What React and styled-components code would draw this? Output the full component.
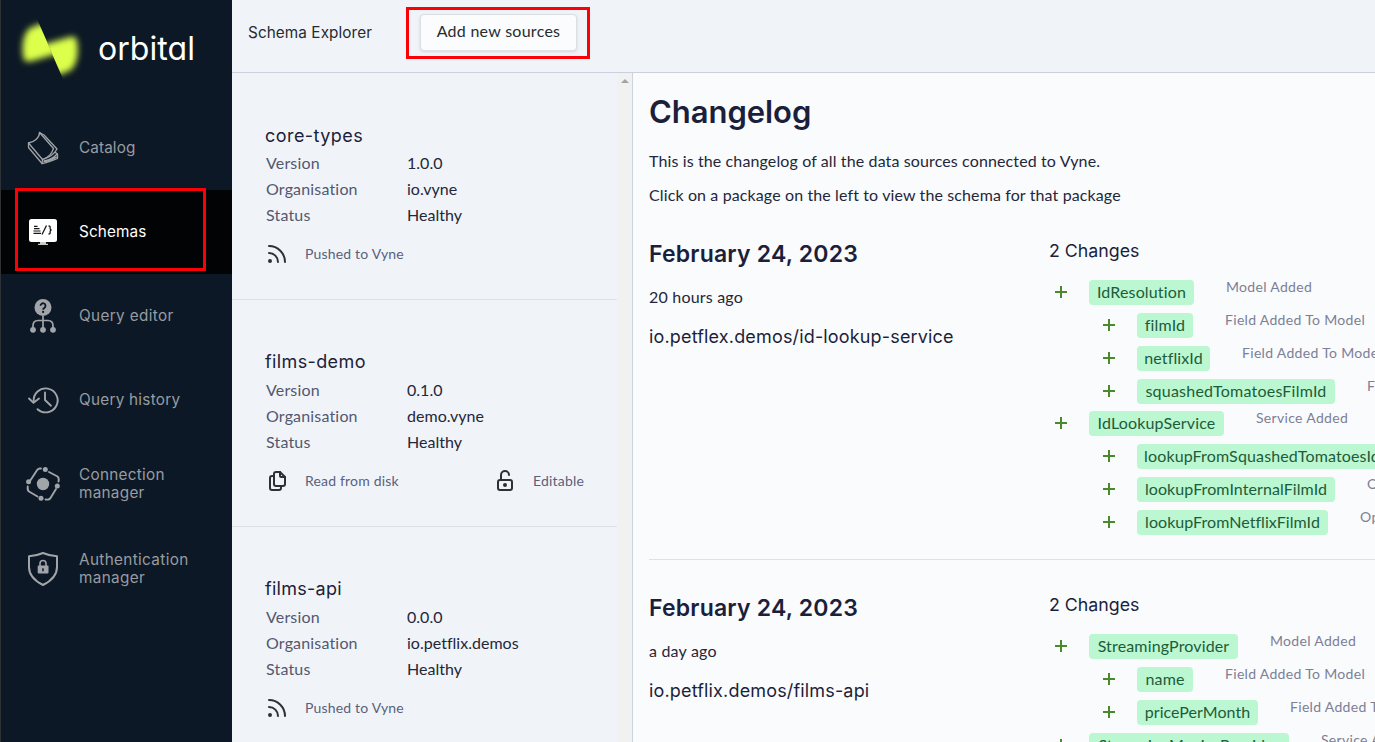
import React from "react";
import styled, { createGlobalStyle, css } from "styled-components";

const display = '"Inter", "Liberation Sans", sans-serif';
const body = '"Lato", "Open Sans", sans-serif';

const GlobalStyle = createGlobalStyle`
  *, *::before, *::after { box-sizing: border-box; }
  body { margin: 0; background: #fafbfd; overflow: hidden; }
  h1, h2, h3, p { margin: 0; }
`;

const Shell = styled.div`
  position: relative;
  display: flex;
  width: 100vw;
  height: 100vh;
  overflow: hidden;
  font-family: ${body};
  font-size: 16px;
  color: #23273a;
`;

/* Sidebar */

const Sidebar = styled.aside`
  flex: 0 0 232px;
  display: flex;
  flex-direction: column;
  background: #0c1825;
  border-left: 1px solid #2f3235;
`;

const Brand = styled.div`
  display: flex;
  align-items: center;
  height: 106px;
  padding: 0 0 8px 13px;
`;

const Wordmark = styled.span`
  margin-left: 10px;
  padding-bottom: 1px;
  font-family: ${display};
  font-feature-settings: "cv11";
  font-size: 32px;
  line-height: 40px;
  letter-spacing: 0.05px;
  color: #fff;
`;

const NavItem = styled.a`
  display: flex;
  align-items: center;
  height: ${(p) => p.$h || 84}px;
  padding-left: 24px;
  gap: 18px;
  font-family: ${display};
  font-size: 15.3px;
  line-height: 18px;
  letter-spacing: ${(p) => p.$ls ?? 0.3}px;
  color: #989ca1;
  white-space: pre-line;
  ${(p) =>
    p.$active &&
    css`
      background: #010305;
      color: #fff;
    `}
`;

const NavIcon = styled.svg`
  flex: none;
  width: 36px;
  height: 36px;
  color: #a1a5a9;
`;

/* Main frame */

const Main = styled.main`
  flex: 1;
  min-width: 0;
  display: flex;
  flex-direction: column;
`;

const Header = styled.header`
  flex: 0 0 73px;
  display: flex;
  align-items: flex-start;
  padding: 14px 16px 0;
  gap: 48px;
  background: #f0f4f9;
  border-bottom: 1px solid #cbd0dc;
`;

const PageTitle = styled.h1`
  width: 124px;
  font: 400 15.3px/37px ${display};
  letter-spacing: 0.08px;
  white-space: nowrap;
  color: #272b30;
`;

const Button = styled.button`
  width: 157px;
  height: 37px;
  padding: 0 0 3px;
  border: 1px solid #dcdfe4;
  border-radius: 4px;
  background: #fbfcfd;
  box-shadow: 0 1px 3px rgba(0, 0, 0, 0.12);
  font: 400 16px/20px ${body};
  letter-spacing: 0.27px;
  color: #272b30;
`;

const Columns = styled.div`
  flex: 1;
  min-height: 0;
  display: flex;
`;

/* Package list */

const PackageList = styled.section`
  flex: 0 0 385px;
  background: #f0f4f9;
  overflow: hidden;
`;

const ScrollTrack = styled.div`
  flex: 0 0 16px;
  display: flex;
  justify-content: center;
  padding-top: 6px;
  background: #f1f1f1;
  border-right: 1px solid #cbd3e1;
`;

const Card = styled.article`
  height: 226.8px;
  padding: 47.6px 33px 0 33px;
  border-bottom: 1px solid #dce0e7;
`;

const CardTitle = styled.h3`
  font: 400 18px/29.4px ${display};
  letter-spacing: ${(p) => p.$ls || 0}px;
  color: #1c2138;
`;

const Property = styled.div`
  display: grid;
  grid-template-columns: 141px 1fr;
  padding-left: 1px;
  line-height: 26px;
  color: #23273a;
`;

const PropertyName = styled.span`
  letter-spacing: 0.17px;
  color: #53586f;
`;

const PropertyValue = styled.span`
  letter-spacing: 0.02px;
`;

const CardFooter = styled.div`
  display: flex;
  justify-content: space-between;
  margin-top: 14px;
`;

const Source = styled.div`
  display: flex;
  align-items: center;
  gap: 16px;
  font-size: 14px;
  line-height: 24px;
  letter-spacing: 0.18px;
  color: #5b6079;
`;

const SourceIcon = styled.svg`
  width: 24px;
  height: 24px;
  fill: none;
  stroke: #2e3033;
  stroke-width: 2;
  stroke-linecap: round;
  stroke-linejoin: round;
`;

/* Changelog */

const Changelog = styled.section`
  flex: 1;
  min-width: 0;
  padding: 16px 0 0 16px;
  background: #fafbfd;
  overflow: hidden;
`;

const Title = styled.h1`
  font: 600 31px/46px ${display};
  letter-spacing: -0.05px;
  color: #1b1f3b;
`;

const Intro = styled.p`
  margin-top: ${(p) => p.$top}px;
  line-height: 22px;
  letter-spacing: 0.12px;
`;

const Entry = styled.article`
  display: flex;
  height: 354px;
  overflow: hidden;
  border-bottom: 1px solid #dde1ea;
`;

const Summary = styled.div`
  flex: 0 0 400px;
`;

const EntryDate = styled.h2`
  padding-top: 32px;
  font: 600 23px/32px ${display};
  letter-spacing: 0.2px;
  color: #1b1f3b;
`;

const Age = styled.p`
  margin-top: 15px;
  line-height: 24px;
  letter-spacing: 0.2px;
`;

const PackageName = styled.h3`
  margin-top: 15px;
  font: 400 18px/26px ${display};
  letter-spacing: 0.16px;
  color: #1b1f3b;
`;

const Changes = styled.div`
  flex: none;
`;

const ChangeCount = styled.h3`
  padding: 33px 0 17px;
  font: 400 17.8px/24px ${display};
  letter-spacing: 0;
  color: #1b1f3b;
`;

const ChangeRow = styled.div`
  display: flex;
  height: 32.85px;
  padding-left: ${(p) => (p.$nested ? 48 : 0)}px;
`;

const PlusIcon = styled.svg`
  width: 24px;
  height: 24px;
  margin-right: 16px;
  stroke: #4a8a2c;
  stroke-width: 2;
`;

const Pill = styled.span`
  flex: none;
  width: ${(p) => p.$w}px;
  height: 25px;
  border-radius: 4px;
  background: #bbf7d0;
  color: #1d5c3a;
  line-height: 24px;
  letter-spacing: ${(p) => p.$ls ?? 0.15}px;
  text-align: center;
  white-space: nowrap;
`;

const ChangeKind = styled.span`
  margin-left: 32px;
  font-size: 14px;
  line-height: 13px;
  letter-spacing: 0.32px;
  color: #7c8096;
  white-space: nowrap;
`;

/* Red outline drawn over the interface to call out a control */
const Callout = styled.div`
  position: absolute;
  left: ${(p) => p.$x}px;
  top: ${(p) => p.$y}px;
  width: ${(p) => p.$w}px;
  height: ${(p) => p.$h}px;
  border: 3px solid #fb0007;
  pointer-events: none;
`;

const LogoWing = () => (
  <g clipPath="url(#half)">
    <path
      filter="url(#soft)"
      d="M29 11 16 16C10 21 7.500 31 9 43 9.500 49.500 12 51 20 48.500L46 41 38 20Z"
      fill="#dcff4c"
    />
  </g>
);

const Logo = () => (
  <svg width="74" height="74" viewBox="0 0 74 74">
    <defs>
      <filter id="soft" x="-30%" y="-30%" width="160%" height="160%">
        <feGaussianBlur stdDeviation="3" />
      </filter>
      <clipPath id="half"><path d="M-10 0H20L52.300 74H-10z" /></clipPath>
    </defs>
    <LogoWing />
    <g transform="rotate(180 36.150 37.250)"><LogoWing /></g>
  </svg>
);

const line = { fill: "none", stroke: "currentColor", strokeLinejoin: "round", strokeLinecap: "round" };

const CatalogIcon = () => (
  <NavIcon viewBox="0 0 36 36">
    <g {...line} strokeWidth="1.3">
      <path d="M14.5 2.5C14.5 8 9 12 3.5 13L17.5 29.5C21 28.5 26.5 25 28.5 18.5Z" />
      <path d="M14.5 2.5 19 5 32 19C29 25 24 27.5 17.5 29.5" />
      <path d="M3.5 13 3.5 17.5 17 33.5C23 33 28 30 32.5 28.5V24L30.5 22.5" />
      <path d="M17.5 29.5 17 33.5M19 31C24 30 29 28 31.5 24.5M19 31.5C24 31.5 28 29 32 27" />
    </g>
  </NavIcon>
);

const SchemasIcon = () => (
  <NavIcon viewBox="0 0 36 36">
    <rect x="4" y="5" width="28" height="23" rx="2.5" fill="#fff" />
    <path d="M15 28h6v1.7h2V31H13v-1.3h2z" fill="#c9cbc6" />
    <path d="M9 12.4h3.5M9 14.7h5.5M8.500 17h7M8.500 19.300h7.500" stroke="#151515" strokeWidth="1.2" />
    <path d="M21.500 11.500 17 20.500M23.500 12c2 0 1.600.6 1.600 2.300 0 1 .3 1.600 1.400 1.700-1.100.1-1.400.7-1.400 1.700 0 1.700.4 2.300-1.600 2.300" stroke="#151515" strokeWidth="1.300" fill="none" />
  </NavIcon>
);

const QueryEditorIcon = () => (
  <NavIcon viewBox="0 0 36 36">
    <circle cx="18" cy="9.500" r="8.500" fill="currentColor" />
    <path d="M15.500 7.800a2.500 2.500 0 1 1 4 2c-1 .7-1.400 1-1.400 2" stroke="#0c1825" strokeWidth="1.800" fill="none" />
    <circle cx="18.100" cy="13.900" r="1.100" fill="#0c1825" />
    <path d="M18 18v13M8 31v-3c0-4 2-5.500 5-5.500h10c3 0 5 1.500 5 5.500v3" stroke="currentColor" strokeWidth="1.700" fill="none" />
    <g fill="currentColor">
      <circle cx="8" cy="31.800" r="2.900" /><circle cx="18" cy="31.800" r="2.900" /><circle cx="28" cy="31.800" r="2.900" />
    </g>
  </NavIcon>
);

const HistoryIcon = () => (
  <NavIcon viewBox="0 0 36 36">
    <g {...line} strokeWidth="1.900">
      <path d="M8.700 19.500A12 12 0 1 1 12.500 27.200" />
      <path d="M4 16.500 8.500 20.700 14 16.500" />
      <path d="M20 10.500V18L26 23.700" />
    </g>
  </NavIcon>
);

const ConnectionIcon = () => (
  <NavIcon viewBox="0 0 36 36">
    <g {...line} strokeWidth="1.900">
      <path d="M16 2.500H14.500C13 2.500 12.500 3.500 11.500 5L5 15" />
      <path d="M24 6 32.500 10.500C34 11.500 34 13 33.500 15.500" />
      <path d="M31 23 25.500 32C24.800 33.500 23.500 34 20.500 33.500" />
      <path d="M12.500 30.500 4 25.500C2.500 24.500 2.500 22.500 2.700 20.500" />
    </g>
    <g fill="currentColor">
      <circle cx="18" cy="18" r="6.200" />
      <circle cx="20.300" cy="3.500" r="2.500" /><circle cx="32.300" cy="20" r="2.500" />
      <circle cx="16" cy="32.300" r="2.500" /><circle cx="3.600" cy="15.700" r="2.500" />
    </g>
  </NavIcon>
);

const AuthIcon = () => (
  <NavIcon viewBox="0 0 36 36">
    <path d="M18 2C13.500 4 9 5 4 5.200V16C4 24 10 30 18 34 26 30 32 24 32 16V5.200C27 5 22.500 4 18 2Z" {...line} strokeWidth="2" />
    <rect x="12.700" y="14.500" width="10.800" height="8" rx="1" fill="currentColor" />
    <path d="M15 15V12.500a3 3 0 0 1 6 0V15" stroke="currentColor" strokeWidth="1.600" fill="none" />
    <path d="M18 17.300v3" stroke="#0c1825" strokeWidth="1.500" />
  </NavIcon>
);

const RssIcon = () => (
  <SourceIcon viewBox="0 0 24 24">
    <circle cx="5" cy="19" r="1" />
    <path d="M4 4a16 16 0 0 1 16 16M4 11a9 9 0 0 1 9 9" />
  </SourceIcon>
);

const FilesIcon = () => (
  <SourceIcon viewBox="0 0 24 24">
    <path d="M15 3v4a1 1 0 0 0 1 1h4" />
    <path d="M18 17h-7a2 2 0 0 1-2-2V5a2 2 0 0 1 2-2h4l5 5v7a2 2 0 0 1-2 2z" />
    <path d="M16 17v2a2 2 0 0 1-2 2H7a2 2 0 0 1-2-2V9a2 2 0 0 1 2-2h2" />
  </SourceIcon>
);

const LockOpenIcon = () => (
  <SourceIcon viewBox="0 0 24 24">
    <rect x="5" y="11" width="14" height="10" rx="2" />
    <circle cx="12" cy="16" r="1" />
    <path d="M8 11V6a4 4 0 0 1 8 0" />
  </SourceIcon>
);

const nav = [
  { label: "Catalog", Icon: CatalogIcon, ls: 0.1 },
  { label: "Schemas", Icon: SchemasIcon, active: true, ls: 0.12 },
  { label: "Query editor", Icon: QueryEditorIcon, ls: 0.35 },
  { label: "Query history", Icon: HistoryIcon, ls: 0.25 },
  { label: "Connection\nmanager", Icon: ConnectionIcon, ls: 0.28 },
  { label: "Authentication\nmanager", Icon: AuthIcon, ls: 0.35, h: 86 },
];

const packages = [
  { name: "core-types", version: "1.0.0", org: "io.vyne", source: "Pushed to Vyne", Icon: RssIcon, ls: 0.45 },
  { name: "films-demo", version: "0.1.0", org: "demo.vyne", source: "Read from disk", Icon: FilesIcon, editable: true, ls: 0.38 },
  { name: "films-api", version: "0.0.0", org: "io.petflix.demos", source: "Pushed to Vyne", Icon: RssIcon, ls: 0.28 },
];

const entries = [
  {
    age: "20 hours ago",
    name: "io.petflex.demos/id-lookup-service",
    changes: [
      { name: "IdResolution", w: 105, kind: "Model Added" },
      { name: "filmId", w: 56, kind: "Field Added To Model", nested: true },
      { name: "netflixId", w: 73, kind: "Field Added To Model", nested: true },
      { name: "squashedTomatoesFilmId", w: 198, kind: "Field Added To Model", nested: true, ls: 0.22 },
      { name: "IdLookupService", w: 135, kind: "Service Added" },
      { name: "lookupFromSquashedTomatoesId", w: 250, kind: "Operation Added", nested: true, ls: 0.14 },
      { name: "lookupFromInternalFilmId", w: 198, kind: "Operation Added", nested: true, ls: 0.08 },
      { name: "lookupFromNetflixFilmId", w: 191, kind: "Operation Added", nested: true, ls: 0.05 },
    ],
  },
  {
    age: "a day ago",
    name: "io.petflix.demos/films-api",
    changes: [
      { name: "StreamingProvider", w: 149, kind: "Model Added" },
      { name: "name", w: 56, kind: "Field Added To Model", nested: true },
      { name: "pricePerMonth", w: 121, kind: "Field Added To Model", nested: true, ls: 0.05 },
      { name: "StreamingMoviesProvider", w: 200, kind: "Service Added", ls: 0.05 },
    ],
  },
];

export default function App() {
  return (
    <Shell>
      <GlobalStyle />
      <Sidebar>
        <Brand>
          <Logo />
          <Wordmark>orbital</Wordmark>
        </Brand>
        {nav.map(({ label, Icon, active, ls, h }) => (
          <NavItem key={label} $active={active} $ls={ls} $h={h}>
            <Icon />
            {label}
          </NavItem>
        ))}
      </Sidebar>
      <Main>
        <Header>
          <PageTitle>Schema Explorer</PageTitle>
          <Button>Add new sources</Button>
        </Header>
        <Columns>
          <PackageList>
            {packages.map(({ name, version, org, source, Icon, editable, ls }) => (
              <Card key={name}>
                <CardTitle $ls={ls}>{name}</CardTitle>
                <Property>
                  <PropertyName>Version</PropertyName>
                  <PropertyValue>{version}</PropertyValue>
                </Property>
                <Property>
                  <PropertyName>Organisation</PropertyName>
                  <PropertyValue>{org}</PropertyValue>
                </Property>
                <Property>
                  <PropertyName>Status</PropertyName>
                  <PropertyValue>Healthy</PropertyValue>
                </Property>
                <CardFooter>
                  <Source><Icon />{source}</Source>
                  {editable && <Source><LockOpenIcon />Editable</Source>}
                </CardFooter>
              </Card>
            ))}
          </PackageList>
          <ScrollTrack>
            <svg width="8" height="4" viewBox="0 0 8 4"><path d="M4 0 8 4H0z" fill="#a3a3a3" /></svg>
          </ScrollTrack>
          <Changelog>
            <Title>Changelog</Title>
            <Intro $top={15}>This is the changelog of all the data sources connected to Vyne.</Intro>
            <Intro $top={12}>Click on a package on the left to view the schema for that package</Intro>
            {entries.map((entry) => (
              <Entry key={entry.name}>
                <Summary>
                  <EntryDate>February 24, 2023</EntryDate>
                  <Age>{entry.age}</Age>
                  <PackageName>{entry.name}</PackageName>
                </Summary>
                <Changes>
                  <ChangeCount>2 Changes</ChangeCount>
                  {entry.changes.map((c) => (
                    <ChangeRow key={c.name} $nested={c.nested}>
                      <PlusIcon viewBox="0 0 24 24"><path d="M6 12h12M12 6v12" /></PlusIcon>
                      <Pill $w={c.w} $ls={c.ls}>{c.name}</Pill>
                      <ChangeKind>{c.kind}</ChangeKind>
                    </ChangeRow>
                  ))}
                </Changes>
              </Entry>
            ))}
          </Changelog>
        </Columns>
      </Main>
      <Callout $x={15} $y={188} $w={191} $h={83} />
      <Callout $x={406} $y={7} $w={184} $h={52} />
    </Shell>
  );
}
